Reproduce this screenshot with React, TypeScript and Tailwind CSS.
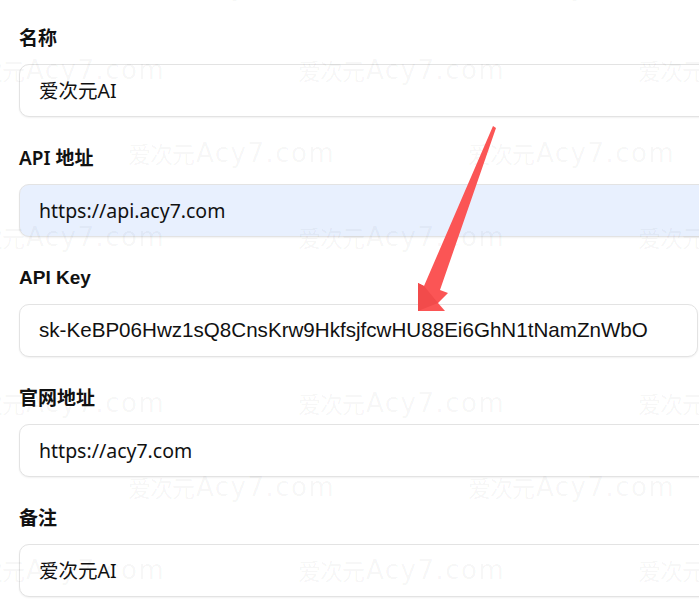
import React from 'react';

const sans = "font-['Noto_Sans','Noto_Sans_CJK_SC',sans-serif]";
const arial = "font-['Liberation_Sans','Noto_Sans_CJK_SC',sans-serif]";

interface FieldProps {
  label: string;
  value: string;
  font?: string;
  filled?: boolean;
  withButton?: boolean;
}

function Field({ label, value, font = sans, filled = false, withButton = false }: FieldProps) {
  return (
    <div className="mb-[29px]">
      <div className={`${font} h-[24px] leading-[24px] mb-[14px] text-[19px] font-semibold text-[#111]`}>
        {label}
      </div>
      <div className="flex gap-[2px]">
        <div
          className={`${font} ${withButton ? 'w-[679px]' : 'w-[720px]'} shrink-0 h-[53px] flex items-center px-[19px] rounded-[10px] border border-[#e3e3e3] shadow-[0_1px_2px_rgba(0,0,0,0.06)] text-[#111] whitespace-nowrap ${
            filled ? 'bg-[#e8f0fe]' : 'bg-white'
          } ${withButton ? 'text-[20.6px]' : 'text-[19.5px]'}`}
        >
          {value}
        </div>
        {withButton && (
          <div className="w-[53px] shrink-0 h-[53px] rounded-[10px] border border-[#e3e3e3] bg-white" />
        )}
      </div>
    </div>
  );
}

// tiled site mark, staggered rows
const marks: { x: number; y: number }[] = [
  { x: 128, y: -14 }, { x: 468, y: -14 },
  { x: -42, y: 70 }, { x: 298, y: 70 }, { x: 638, y: 70 },
  { x: 128, y: 153 }, { x: 468, y: 153 },
  { x: -42, y: 237 }, { x: 298, y: 237 }, { x: 638, y: 237 },
  { x: -42, y: 403 }, { x: 298, y: 403 }, { x: 638, y: 403 },
  { x: 128, y: 487 }, { x: 468, y: 487 },
  { x: -42, y: 570 }, { x: 298, y: 570 }, { x: 638, y: 570 },
];

function Watermark() {
  return (
    <div className="absolute inset-0 pointer-events-none">
      {marks.map((m, i) => (
        <div
          key={i}
          className="absolute h-[32px] flex items-center whitespace-nowrap text-[rgba(0,0,0,0.045)]"
          style={{ left: m.x, top: m.y - 16 }}
        >
          <span className="font-['Noto_Sans_CJK_SC',sans-serif] text-[23px] tracking-[-1px]">爱次元</span>
          <span className="font-['DejaVu_Sans',sans-serif] text-[26px] tracking-[1.5px] ml-[2px]">Acy7.com</span>
        </div>
      ))}
    </div>
  );
}

function Arrow() {
  return (
    <svg className="absolute inset-0 pointer-events-none" width="699" height="615" viewBox="0 0 699 615">
      <polygon
        points="493,126 496,128 440,290 448,293 438,303 445,311 418,311 418,283 424,286"
        fill="#fb5555"
      />
      <polygon points="418,283 424,286 438,303 418,311" fill="#f24b4b" />
    </svg>
  );
}

export default function App() {
  return (
    <div className="relative w-[699px] h-[615px] overflow-hidden bg-white">
      <div className="pt-[26px] pl-[19px] flex flex-col">
        <Field label="名称" value="爱次元AI" />
        <Field label="API 地址" value="https://api.acy7.com" filled />
        <Field
          label="API Key"
          value="sk-KeBP06Hwz1sQ8CnsKrw9HkfsjfcwHU88Ei6GhN1tNamZnWbO"
          font={arial}
          withButton
        />
        <Field label="官网地址" value="https://acy7.com" />
        <Field label="备注" value="爱次元AI" />
      </div>
      <Watermark />
      <Arrow />
    </div>
  );
}
